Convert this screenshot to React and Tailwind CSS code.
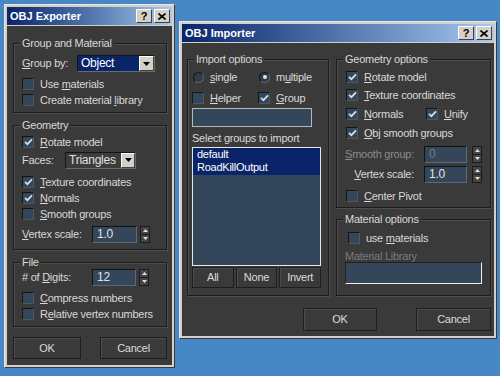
import React from "react";

const FONT = "font-['Liberation_Sans',Arial,sans-serif] text-[11px] tracking-[-0.25px]";

function Mn({ text, at }) {
  if (at == null) return <span>{text}</span>;
  return (
    <span className="whitespace-nowrap">
      {text.slice(0, at)}
      <span className="underline underline-offset-[1px]">{text[at]}</span>
      {text.slice(at + 1)}
    </span>
  );
}

function CaptionButtons() {
  return (
    <div className="ml-auto flex gap-[2px]">
      <div className="w-[16px] h-[14px] bg-[#d4d0c8] border border-t-white border-l-white border-r-[#404040] border-b-[#404040] flex items-center justify-center text-black font-bold text-[11px] leading-none">
        ?
      </div>
      <div className="w-[16px] h-[14px] bg-[#d4d0c8] border border-t-white border-l-white border-r-[#404040] border-b-[#404040] flex items-center justify-center">
        <svg width="8" height="7" viewBox="0 0 8 7">
          <path d="M0.5 0.5 L7.5 6.5 M7.5 0.5 L0.5 6.5" stroke="#000" strokeWidth="1.6" />
        </svg>
      </div>
    </div>
  );
}

function Win({ title, className, children }) {
  return (
    <div className={`absolute flex flex-col bg-[#d4d0c8] border border-t-[#ebe8e2] border-l-[#ebe8e2] border-r-[#3a3a3a] border-b-[#3a3a3a] p-[2px] ${className}`}>
      <div className="h-[18px] shrink-0 flex items-center bg-linear-to-r from-[#0a246a] to-[#a6caf0] pl-[3px] pr-[2px]">
        <span className="font-bold text-white text-[11px] tracking-normal">{title}</span>
        <CaptionButtons />
      </div>
      <div className="mt-[1px] flex-1 flex flex-col bg-[#3a3a3a] text-[#d8d8d8]">{children}</div>
    </div>
  );
}

function Group({ title, className = "", children }) {
  return (
    <div className={`relative border border-[#1c1c1c] shadow-[inset_1px_1px_0_#4e4e4e,1px_1px_0_#4e4e4e] ${className}`}>
      <span className="absolute -top-[7px] left-[6px] px-[2px] bg-[#3a3a3a] leading-[12px] whitespace-nowrap">{title}</span>
      {children}
    </div>
  );
}

function Check({ on }) {
  return (
    <span className="w-[12px] h-[12px] shrink-0 bg-[#34475a] border border-t-[#151515] border-l-[#151515] border-r-[#4a5866] border-b-[#4a5866] flex items-center justify-center">
      {on && (
        <svg width="9" height="8" viewBox="0 0 9 8">
          <path d="M1 3.8 L3.4 6.2 L8 1.4" fill="none" stroke="#d6dde4" strokeWidth="1.8" />
        </svg>
      )}
    </span>
  );
}

function CheckRow({ on, text, at, className = "" }) {
  return (
    <div className={`flex items-center h-[16px] gap-[6px] ${className}`}>
      <Check on={on} />
      <Mn text={text} at={at} />
    </div>
  );
}

function Radio({ on }) {
  return (
    <span className="w-[11px] h-[11px] shrink-0 rounded-full bg-[#2f3b48] border border-t-[#151515] border-l-[#151515] border-r-[#5a6470] border-b-[#5a6470] flex items-center justify-center">
      {on && <span className="w-[4px] h-[4px] rounded-full bg-[#e4e4e4]" />}
    </span>
  );
}

function Arrow({ color = "#000" }) {
  return (
    <svg width="7" height="4" viewBox="0 0 7 4">
      <path d="M0 0 H7 L3.5 4 Z" fill={color} />
    </svg>
  );
}

function Spinner({ h = "h-[17px]" }) {
  return (
    <div className={`w-[10px] ${h} flex flex-col border border-[#1a1a1a] bg-[#454545]`}>
      <div className="flex-1 flex items-center justify-center border-b border-[#1a1a1a]">
        <svg width="5" height="3" viewBox="0 0 5 3">
          <path d="M0 3 H5 L2.5 0 Z" fill="#e0e0e0" />
        </svg>
      </div>
      <div className="flex-1 flex items-center justify-center">
        <svg width="5" height="3" viewBox="0 0 5 3">
          <path d="M0 0 H5 L2.5 3 Z" fill="#e0e0e0" />
        </svg>
      </div>
    </div>
  );
}

function NumField({ value, w, dim }) {
  return (
    <div className={`${w} h-[17px] bg-[#34475a] border border-t-[#111] border-l-[#111] border-r-[#5c6a78] border-b-[#5c6a78] pl-[4px] leading-[15px] text-[12px] ${dim ? "text-[#6f7d8a]" : "text-[#e2e2e2]"}`}>
      {value}
    </div>
  );
}

function Btn({ children, className = "" }) {
  return (
    <div className={`flex items-center justify-center bg-[#3a3a3a] border border-[#1e1e1e] shadow-[inset_1px_1px_0_#4c4c4c] text-[#dcdcdc] ${className}`}>
      {children}
    </div>
  );
}

function Exporter() {
  return (
    <Win title="OBJ Exporter" className="left-[4px] top-[4px] w-[171px] h-[364px]">
      <div className="pt-[17px] pl-[6px] pr-[5px] flex flex-col">
        <Group title="Group and Material" className="pt-[11px] pb-[4px] pl-[8px]">
          <div className="flex items-center h-[17px]">
            <span className="w-[55px]">
              <Mn text="Group by:" at={0} />
            </span>
            <div className="w-[78px] h-[17px] flex border border-t-[#151515] border-l-[#151515] border-r-[#6a6a6a] border-b-[#6a6a6a]">
              <div className="flex-1 bg-[#0a246a] text-white pl-[3px] leading-[15px] text-[12px]">Object</div>
              <div className="w-[15px] bg-[#d4d0c8] border border-t-white border-l-white border-r-[#404040] border-b-[#404040] flex items-center justify-center">
                <Arrow />
              </div>
            </div>
          </div>
          <CheckRow on={false} text="Use materials" at={4} className="mt-[4px]" />
          <CheckRow on={false} text="Create material library" at={16} />
        </Group>

        <Group title="Geometry" className="mt-[12px] pt-[8px] pb-[6px] pl-[8px]">
          <CheckRow on text="Rotate model" at={0} />
          <div className="flex items-center h-[16px] mt-[2px]">
            <span className="w-[43px]">Faces:</span>
            <div className="w-[71px] h-[17px] flex border border-t-[#151515] border-l-[#151515] border-r-[#6a6a6a] border-b-[#6a6a6a]">
              <div className="flex-1 bg-[#3c3c3c] pl-[3px] leading-[15px] text-[12px] text-[#e0e0e0]">Triangles</div>
              <div className="w-[14px] bg-[#d4d0c8] border border-t-white border-l-white border-r-[#404040] border-b-[#404040] flex items-center justify-center">
                <Arrow />
              </div>
            </div>
          </div>
          <CheckRow on text="Texture coordinates" at={0} className="mt-[6px]" />
          <CheckRow on text="Normals" at={0} />
          <CheckRow on={false} text="Smooth groups" at={0} />
          <div className="flex items-center h-[17px] mt-[4px]">
            <span className="w-[70px]">
              <Mn text="Vertex scale:" at={0} />
            </span>
            <NumField value="1.0" w="w-[45px]" />
            <div className="ml-[3px]">
              <Spinner />
            </div>
          </div>
        </Group>

        <Group title="File" className="mt-[12px] pt-[6px] pb-[4px] pl-[8px]">
          <div className="flex items-center h-[17px]">
            <span className="w-[70px]">
              <Mn text="# of Digits:" at={5} />
            </span>
            <NumField value="12" w="w-[44px]" />
            <div className="ml-[3px]">
              <Spinner />
            </div>
          </div>
          <CheckRow on={false} text="Compress numbers" at={0} className="mt-[4px]" />
          <CheckRow on={false} text="Relative vertex numbers" at={1} />
        </Group>

        <div className="mt-[10px] flex justify-between">
          <Btn className="w-[68px] h-[22px]">OK</Btn>
          <Btn className="w-[67px] h-[22px]">Cancel</Btn>
        </div>
      </div>
    </Win>
  );
}

function Importer() {
  return (
    <Win title="OBJ Importer" className="left-[179px] top-[21px] w-[318px] h-[318px]">
      <div className="pt-[16px] pl-[5px] pr-[3px] flex flex-col">
        <div className="flex gap-[7px]">
          <Group title="Import options" className="w-[142px] pt-[9px] pb-[7px] pl-[4px] pr-[7px]">
            <div className="flex items-center h-[16px]">
              <div className="w-[66px] flex items-center gap-[6px] pl-[1px]">
                <Radio on={false} />
                <Mn text="single" at={0} />
              </div>
              <div className="flex items-center gap-[6px] pl-[1px]">
                <Radio on />
                <Mn text="multiple" at={1} />
              </div>
            </div>
            <div className="flex items-center h-[16px] mt-[5px]">
              <CheckRow on={false} text="Helper" at={0} className="w-[66px]" />
              <CheckRow on text="Group" at={0} />
            </div>
            <div className="mt-[2px] w-[120px] h-[19px] bg-[#34475a] border border-[#b8b8b8]" />
            <div className="mt-[4px] h-[14px] leading-[14px] whitespace-nowrap">Select groups to import</div>
            <div className="mt-[2px] h-[119px] bg-[#34475a] border border-[#e6e6e6] flex flex-col text-white text-[11px]">
              <div className="h-[13px] leading-[13px] bg-[#0a246a] pl-[4px]">default</div>
              <div className="h-[14px] leading-[13px] bg-[#0a246a] pl-[4px]">RoadKillOutput</div>
            </div>
            <div className="mt-[1px] grid grid-cols-3 gap-[2px]">
              <Btn className="h-[21px]">All</Btn>
              <Btn className="h-[21px]">None</Btn>
              <Btn className="h-[21px]">Invert</Btn>
            </div>
          </Group>

          <div className="flex flex-col w-[155px]">
            <Group title="Geometry options" className="pt-[9px] pb-[3px] pl-[9px]">
              <CheckRow on text="Rotate model" at={0} />
              <CheckRow on text="Texture coordinates" at={0} className="mt-[2px]" />
              <div className="flex items-center h-[16px] mt-[3px]">
                <CheckRow on text="Normals" at={0} className="w-[80px]" />
                <CheckRow on text="Unify" at={0} />
              </div>
              <CheckRow on text="Obj smooth groups" at={0} className="mt-[3px]" />
              <div className="flex items-center h-[17px] mt-[5px]">
                <span className="w-[68px] flex justify-end whitespace-nowrap text-[#8a8a8a]">
                  <Mn text="Smooth group:" at={0} />
                </span>
                <div className="ml-[10px]">
                  <NumField value="0" w="w-[43px]" dim />
                </div>
                <div className="ml-[5px]">
                  <Spinner />
                </div>
              </div>
              <div className="flex items-center h-[17px] mt-[3px]">
                <span className="w-[68px] flex justify-end whitespace-nowrap">
                  <Mn text="Vertex scale:" at={0} />
                </span>
                <div className="ml-[10px]">
                  <NumField value="1.0" w="w-[43px]" />
                </div>
                <div className="ml-[5px]">
                  <Spinner />
                </div>
              </div>
              <CheckRow on={false} text="Center Pivot" at={0} className="mt-[5px]" />
            </Group>

            <Group title="Material options" className="mt-[11px] pt-[10px] pb-[11px] pl-[8px] pr-[8px]">
              <CheckRow on={false} text="use materials" at={4} className="pl-[3px]" />
              <div className="mt-[4px] h-[12px] leading-[12px] text-[#7a7a7a]">Material Library</div>
              <div className="h-[22px] bg-[#34475a] border border-t-[#202020] border-l-[#202020] border-r-[#f0f0f0] border-b-[#f0f0f0]" />
            </Group>
          </div>
        </div>

        <div className="mt-[12px] flex justify-end gap-[39px]">
          <Btn className="w-[74px] h-[23px]">OK</Btn>
          <Btn className="w-[75px] h-[23px]">Cancel</Btn>
        </div>
      </div>
    </Win>
  );
}

export default function App() {
  return (
    <div className={`relative w-[500px] h-[376px] overflow-hidden bg-[#4787c6] ${FONT}`}>
      <Exporter />
      <Importer />
    </div>
  );
}
